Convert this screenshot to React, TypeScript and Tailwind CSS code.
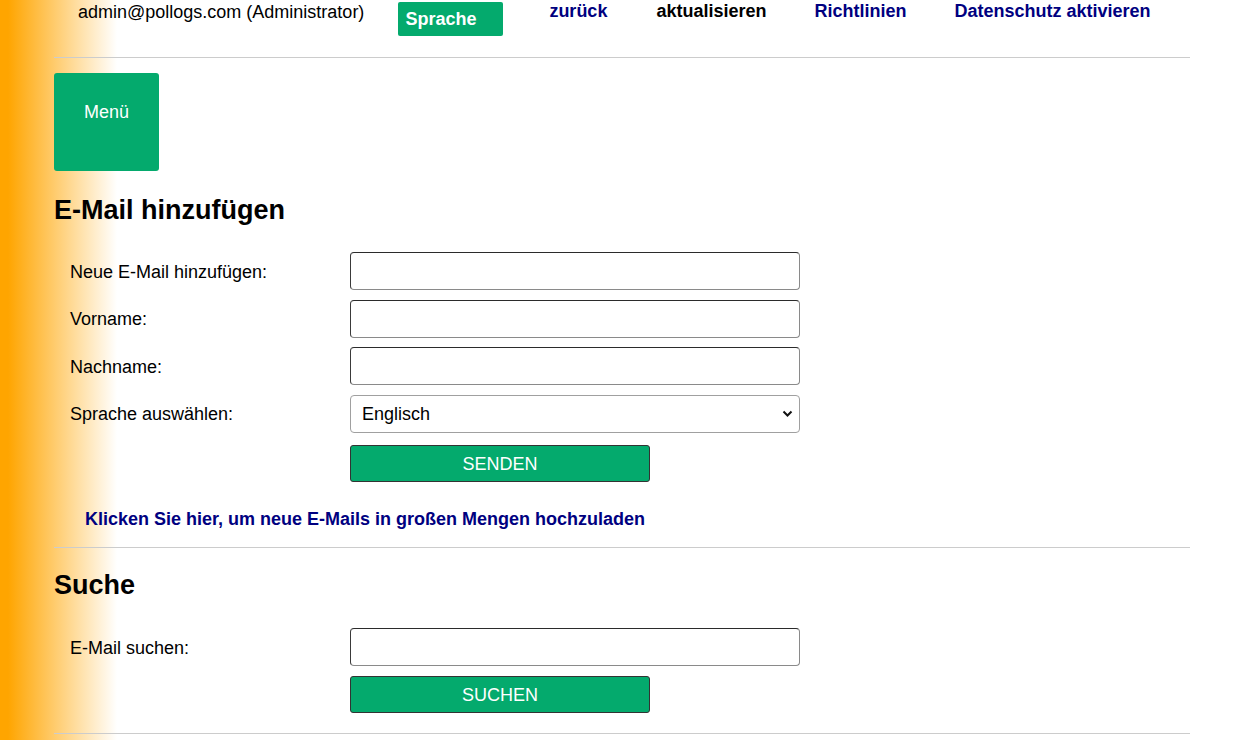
import React from 'react';

const font = { fontFamily: '"Liberation Sans", Arial, sans-serif' };

function FormRow({ label, children }: { label: string; children: React.ReactNode }) {
  return (
    <div className="grid grid-cols-[296px_450px] items-center h-[38px]">
      <label className="pl-[16px] pt-[2px] text-[18px] text-black">{label}</label>
      {children}
    </div>
  );
}

function TextInput() {
  return (
    <input
      type="text"
      className="h-[38px] w-[450px] rounded-[4px] border border-t-[#2b2b2b] border-l-[#3a3a3a] border-r-[#8a8a8a] border-b-[#8a8a8a] bg-white px-[10px] text-[18px] outline-none"
    />
  );
}

function GreenButton({ children }: { children: React.ReactNode }) {
  return (
    <button className="h-[37px] w-[300px] rounded-[3px] border border-[#333] bg-[#04aa6d] text-[18px] text-white leading-none">
      {children}
    </button>
  );
}

export default function App() {
  return (
    <div
      className="min-h-screen w-full bg-[linear-gradient(to_right,#ffa500_8px,#ffffff_117px)] text-black"
      style={font}
    >
      <div className="ml-[54px] w-[1136px]">
        {/* top bar */}
        <div className="flex items-start h-[58px] border-b border-[#cccccc]">
          <span className="pl-[24px] text-[18px] leading-[20.7px] mt-[1.5px]">
            admin@pollogs.com (Administrator)
          </span>
          <button className="ml-[34px] mt-[2px] h-[34px] w-[105px] rounded-[2px] bg-[#04aa6d] pl-[7px] text-left text-[18px] font-bold text-white">
            Sprache
          </button>
          <a className="ml-[46px] mt-[1px] text-[18px] font-bold text-[#000080] leading-[20.7px]">zurück</a>
          <a className="ml-[49px] mt-[1px] text-[18px] font-bold text-black leading-[20.7px]">aktualisieren</a>
          <a className="ml-[48px] mt-[1px] text-[18px] font-bold text-[#000080] leading-[20.7px]">Richtlinien</a>
          <a className="ml-[48px] mt-[1px] text-[18px] font-bold text-[#000080] leading-[20.7px]">
            Datenschutz aktivieren
          </a>
        </div>

        {/* menu */}
        <div className="mt-[15px] h-[98px] w-[105px] rounded-[3px] bg-[#04aa6d] pt-[29px] text-center text-[18px] text-white leading-[20.7px]">
          Menü
        </div>

        {/* add email */}
        <h2 className="mt-[24px] text-[27px] font-bold leading-[31px]">E-Mail hinzufügen</h2>
        <div className="mt-[26px] flex flex-col gap-[9.5px]">
          <FormRow label="Neue E-Mail hinzufügen:">
            <TextInput />
          </FormRow>
          <FormRow label="Vorname:">
            <TextInput />
          </FormRow>
          <FormRow label="Nachname:">
            <TextInput />
          </FormRow>
          <FormRow label="Sprache auswählen:">
            <div className="relative h-[38px] w-[450px]">
              <select className="h-[38px] w-[450px] appearance-none rounded-[4px] border border-[#a0a0a0] bg-white pl-[11px] pt-[2px] text-[18px] outline-none">
                <option>Englisch</option>
                <option>Deutsch</option>
              </select>
              <svg
                className="pointer-events-none absolute right-[7px] top-[15px]"
                width="11"
                height="8"
                viewBox="0 0 11 8"
              >
                <path d="M1.5 1.5 L5.5 5.5 L9.5 1.5" fill="none" stroke="#111" strokeWidth="2" />
              </svg>
            </div>
          </FormRow>
        </div>
        <div className="mt-[12.5px] pl-[296px]">
          <GreenButton>SENDEN</GreenButton>
        </div>
        <div className="mt-[25.5px] pl-[31px]">
          <a className="text-[18px] font-bold text-[#000080] leading-[20.7px]">
            Klicken Sie hier, um neue E-Mails in großen Mengen hochzuladen
          </a>
        </div>
        <div className="mt-[15.5px] border-t border-[#cccccc]" />

        {/* search */}
        <h2 className="mt-[22px] text-[27px] font-bold leading-[31px]">Suche</h2>
        <div className="mt-[27px]">
          <FormRow label="E-Mail suchen:">
            <TextInput />
          </FormRow>
        </div>
        <div className="mt-[10px] pl-[296px]">
          <GreenButton>SUCHEN</GreenButton>
        </div>
        <div className="mt-[20px] border-t border-[#cccccc]" />
        <div className="h-[40px]" />
      </div>
    </div>
  );
}
